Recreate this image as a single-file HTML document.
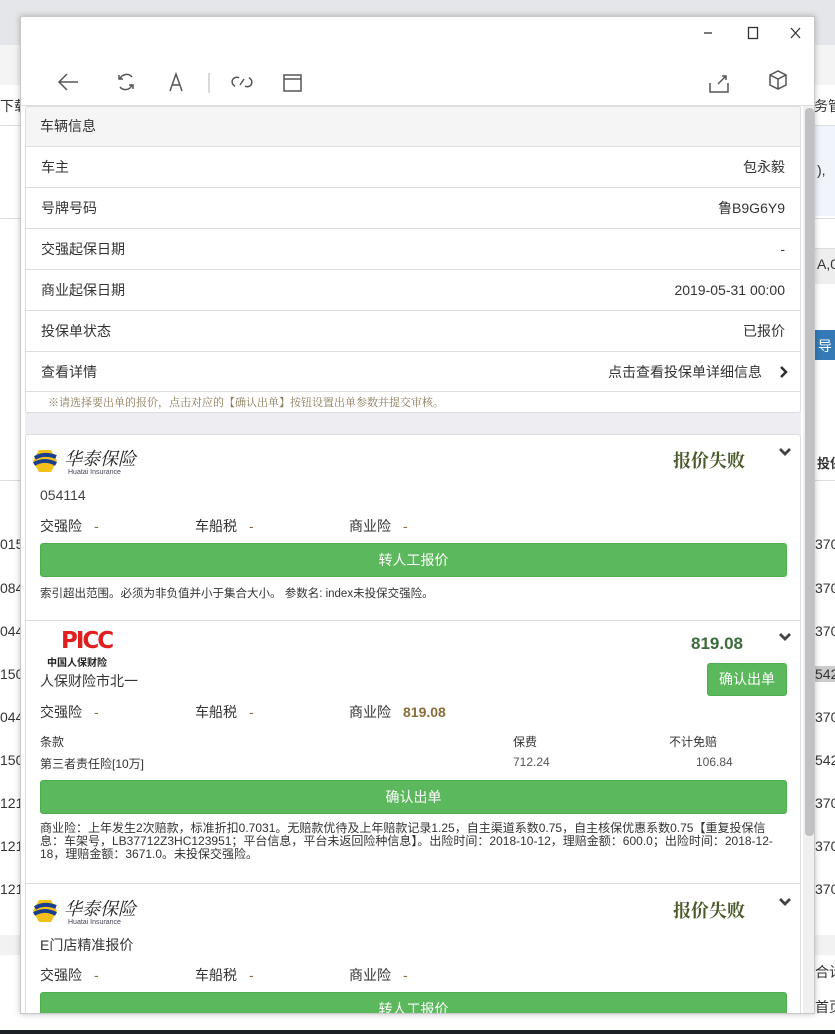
<!DOCTYPE html>
<html><head><meta charset="utf-8"><style>
*{margin:0;padding:0;box-sizing:border-box}
body{width:835px;height:1034px;position:relative;overflow:hidden;background:#fff;font-family:"Liberation Sans","Noto Sans CJK SC",sans-serif;font-size:14px;color:#333}
.a{position:absolute;white-space:nowrap}
.bgrow{position:absolute;left:0;width:835px;border-top:1px solid #ddd}
.win{position:absolute;left:20px;top:16px;width:795px;height:998px;background:#fff;border:1px solid #c8c8c8;box-shadow:0 0 6px rgba(0,0,0,.25);overflow:hidden}
.content{position:absolute;left:4px;top:89px;width:776px;height:910px;background:#eeeef2;overflow:hidden}
.card{position:absolute;left:0;width:776px;background:#fff;border:1px solid #ddd;border-radius:3px}
.row{position:absolute;left:0;width:774px;height:41px;border-top:1px solid #ddd;line-height:40px;padding:0 15px}
.row .r{position:absolute;right:15px;top:0}
.btn{position:absolute;background:#5cb85c;color:#fff;text-align:center;border-radius:3px;border:1px solid #4cae4c}
.lbl{position:absolute;font-size:14px}
.dash{color:#8a6d3b;margin-left:12px}
.fail{position:absolute;font-family:"Noto Serif CJK SC",serif;font-size:18px;font-weight:bold;color:#4a5a2a}
.chev{position:absolute}
</style></head><body>
<div class="a" style="left:0;top:0;width:835px;height:45px;background:#e4e6e9"></div>
<div class="a" style="left:0;top:45px;width:835px;height:40px;background:#f4f4f4"></div>
<div class="bgrow" style="top:125px"></div>
<div class="a" style="left:0;top:96px;font-size:14px;color:#333">下载</div>
<div class="a" style="left:814px;top:96px;font-size:14px">务管</div>
<div class="a" style="left:815px;top:126px;width:20px;height:90px;background:#f0f4fb"></div>
<div class="a" style="left:817px;top:162px">),</div>
<div class="bgrow" style="top:218px"></div>
<div class="a" style="left:815px;top:248px;width:20px;height:36px;background:#eee;border-top:1px solid #ddd"></div>
<div class="a" style="left:817px;top:256px">A,0</div>
<div class="a" style="left:815px;top:330px;width:20px;height:30px;background:#337ab7;color:#fff;padding:6px 0 0 3px">导</div>
<div class="a" style="left:817px;top:453px;font-size:13px;font-weight:bold">投保</div>
<div class="bgrow" style="top:480px"></div>
<div class="a" style="left:0;top:536px">015</div><div class="a" style="left:815px;top:536px">370</div>
<div class="a" style="left:0;top:580px">084</div><div class="a" style="left:815px;top:580px">370</div>
<div class="a" style="left:0;top:623px">044</div><div class="a" style="left:815px;top:623px">370</div>
<div class="a" style="left:0;top:666px">150</div><div class="a" style="left:815px;top:666px;background:#ccc">542</div>
<div class="a" style="left:0;top:709px">044</div><div class="a" style="left:815px;top:709px">370</div>
<div class="a" style="left:0;top:752px">150</div><div class="a" style="left:815px;top:752px">542</div>
<div class="a" style="left:0;top:795px">121</div><div class="a" style="left:815px;top:795px">370</div>
<div class="a" style="left:0;top:838px">121</div><div class="a" style="left:815px;top:838px">370</div>
<div class="a" style="left:0;top:881px">121</div><div class="a" style="left:815px;top:881px">370</div>
<div class="a" style="left:0;top:935px;width:835px;height:20px;background:#f2f2f2"></div>
<div class="a" style="left:815px;top:962px">合计</div>
<div class="a" style="left:815px;top:997px">首页</div>
<div class="a" style="left:0;top:1014px;width:835px;height:16px;background:#fff"></div>
<div class="a" style="left:0;top:1030px;width:835px;height:4px;background:#1c1f24"></div>

<div class="win">
  <svg class="a" style="left:0;top:0" width="795" height="40" viewBox="0 0 795 40" fill="none" stroke="#333" stroke-width="1.3">
    <path d="M683 16h8"/>
    <rect x="727.5" y="10.5" width="9" height="11"/>
    <path d="M770 11l9 10M779 11l-9 10"/>
  </svg>
  <svg class="a" style="left:0;top:50px" width="795" height="32" viewBox="0 0 795 32" fill="none" stroke="#555" stroke-width="1.5">
    <path d="M57 15H38M46 7l-8 8 8 8"/>
    <path d="M111 10a7 7 0 0 0-12 2M98 8v4h4"/>
    <path d="M99 20a7 7 0 0 0 12-2M112 22v-4h-4"/>
    <path d="M149 24l6-17 6 17M151 18h8"/>
    <path d="M188 6v20" stroke="#ccc"/>
    <path d="M218 11a4.5 4.5 0 0 0-6 6.5l2 2M224 19a4.5 4.5 0 0 0 6-6.5l-2-2M219 18l4-6"/>
    <rect x="263" y="8" width="17" height="16"/><path d="M263 12h17"/>
    <path d="M689 16v9h18v-9M697 17l8-8M701 9h4v4"/>
    <path d="M749 8l8-4 8 4v10l-8 4-8-4zM749 8l8 4 8-4M757 12v10"/>
  </svg>
  <div class="a" style="left:0;top:88px;width:795px;height:1px;background:#ddd"></div>
  <div class="a" style="left:782px;top:89px;width:13px;height:910px;background:#f0f0f0"></div>
  <div class="a" style="left:784px;top:91px;width:9px;height:728px;background:#c1c1c5;border-radius:4px"></div>

  <div class="content">
    <div class="card" style="top:0;height:307px;background:#fff">
      <div class="a" style="left:0;top:0;width:774px;height:39px;background:#f5f5f5;line-height:38px;padding-left:14px;font-size:14px">车辆信息</div>
      <div class="row" style="top:39px">车主<span class="r">包永毅</span></div>
      <div class="row" style="top:80px">号牌号码<span class="r">鲁B9G6Y9</span></div>
      <div class="row" style="top:121px">交强起保日期<span class="r">-</span></div>
      <div class="row" style="top:162px">商业起保日期<span class="r">2019-05-31 00:00</span></div>
      <div class="row" style="top:203px">投保单状态<span class="r">已报价</span></div>
      <div class="row" style="top:244px;border-bottom:1px solid #ddd">查看详情<span class="r" style="right:38px">点击查看投保单详细信息</span>
        <svg class="a" style="left:753px;top:14px" width="10" height="12" viewBox="0 0 10 12"><path d="M2 1l5 5-5 5" stroke="#333" stroke-width="2.6" fill="none"/></svg></div>
      <div class="a" style="left:22px;top:287px;font-size:11px;color:#8a7a5a;font-family:'Noto Serif CJK SC',serif">※请选择要出单的报价，点击对应的【确认出单】按钮设置出单参数并提交审核。</div>
    </div>

    <div class="card" style="top:328px;height:600px">
      <svg class="a" style="left:6px;top:14px" width="26" height="24" viewBox="0 0 26 24"><path d="M7 1h12l6 11-6 11H7L1 12z" fill="#f3c019"/><path d="M3 9c6-4 14-4 21-1M2 15c7-4 15-4 22 0" stroke="#1b3f8f" stroke-width="4" fill="none"/></svg>
      <div class="a" style="left:38px;top:10px;font-family:'Noto Serif CJK SC',serif;font-size:18px;font-style:italic;color:#222">华泰保险</div>
      <div class="a" style="left:42px;top:34px;font-size:7px;color:#445">Huatai Insurance</div>
      <div class="fail" style="left:647px;top:12px">报价失败</div>
      <svg class="chev" style="left:752px;top:12px" width="14" height="10" viewBox="0 0 14 10"><path d="M2 2l5 5 5-5" stroke="#444" stroke-width="2.8" fill="none"/></svg>
      <div class="a" style="left:14px;top:52px;color:#444">054114</div>
      <div class="lbl" style="left:14px;top:81px">交强险<span class="dash">-</span></div>
      <div class="lbl" style="left:169px;top:81px">车船税<span class="dash">-</span></div>
      <div class="lbl" style="left:323px;top:81px">商业险<span class="dash">-</span></div>
      <div class="btn" style="left:14px;top:108px;width:747px;height:34px;line-height:32px">转人工报价</div>
      <div class="a" style="left:14px;top:150px;font-size:11.5px">索引超出范围。必须为非负值并小于集合大小。 参数名: index未投保交强险。</div>
      <div class="a" style="left:0;top:185px;width:774px;height:1px;background:#ddd"></div>
      <div class="a" style="left:35px;top:193px;font-size:23px;font-weight:900;color:#e02020;letter-spacing:-2px;font-family:'DejaVu Sans',sans-serif">PICC</div>
      <div class="a" style="left:21px;top:219px;font-size:10px;font-weight:bold;color:#222">中国人保财险</div>
      <div class="a" style="left:14px;top:236px">人保财险市北一</div>
      <div class="a" style="left:665px;top:199px;font-size:17px;font-weight:bold;color:#3c6b3c">819.08</div>
      <svg class="chev" style="left:752px;top:197px" width="14" height="10" viewBox="0 0 14 10"><path d="M2 2l5 5 5-5" stroke="#444" stroke-width="2.8" fill="none"/></svg>
      <div class="btn" style="left:681px;top:228px;width:80px;height:33px;line-height:31px">确认出单</div>
      <div class="lbl" style="left:14px;top:267px">交强险<span class="dash">-</span></div>
      <div class="lbl" style="left:169px;top:267px">车船税<span class="dash">-</span></div>
      <div class="lbl" style="left:323px;top:267px">商业险<span style="color:#8a6d3b;font-weight:bold;margin-left:12px">819.08</span></div>
      <div class="a" style="left:14px;top:298px;font-size:12px">条款</div>
      <div class="a" style="left:487px;top:298px;font-size:12px">保费</div>
      <div class="a" style="left:643px;top:298px;font-size:12px">不计免赔</div>
      <div class="a" style="left:14px;top:320px;font-size:12px">第三者责任险[10万]</div>
      <div class="a" style="left:487px;top:320px;font-size:12px;color:#555">712.24</div>
      <div class="a" style="left:670px;top:320px;font-size:12px;color:#555">106.84</div>
      <div class="btn" style="left:14px;top:345px;width:747px;height:34px;line-height:32px">确认出单</div>
      <div class="a" style="left:14px;top:387px;width:740px;white-space:normal;font-size:12px;line-height:13px">商业险：上年发生2次赔款，标准折扣0.7031。无赔款优待及上年赔款记录1.25，自主渠道系数0.75，自主核保优惠系数0.75【重复投保信息：车架号，LB37712Z3HC123951；平台信息，平台未返回险种信息】。出险时间：2018-10-12，理赔金额：600.0；出险时间：2018-12-18，理赔金额：3671.0。未投保交强险。</div>
      <div class="a" style="left:0;top:448px;width:774px;height:1px;background:#ddd"></div>
      <svg class="a" style="left:6px;top:464px" width="26" height="24" viewBox="0 0 26 24"><path d="M7 1h12l6 11-6 11H7L1 12z" fill="#f3c019"/><path d="M3 9c6-4 14-4 21-1M2 15c7-4 15-4 22 0" stroke="#1b3f8f" stroke-width="4" fill="none"/></svg>
      <div class="a" style="left:38px;top:460px;font-family:'Noto Serif CJK SC',serif;font-size:18px;font-style:italic;color:#222">华泰保险</div>
      <div class="a" style="left:42px;top:484px;font-size:7px;color:#445">Huatai Insurance</div>
      <div class="fail" style="left:647px;top:462px">报价失败</div>
      <svg class="chev" style="left:752px;top:462px" width="14" height="10" viewBox="0 0 14 10"><path d="M2 2l5 5 5-5" stroke="#444" stroke-width="2.8" fill="none"/></svg>
      <div class="a" style="left:14px;top:500px">E门店精准报价</div>
      <div class="lbl" style="left:14px;top:530px">交强险<span class="dash">-</span></div>
      <div class="lbl" style="left:169px;top:530px">车船税<span class="dash">-</span></div>
      <div class="lbl" style="left:323px;top:530px">商业险<span class="dash">-</span></div>
      <div class="btn" style="left:14px;top:557px;width:747px;height:34px;line-height:32px">转人工报价</div>
    </div>
  </div>
</div>
</body></html>
